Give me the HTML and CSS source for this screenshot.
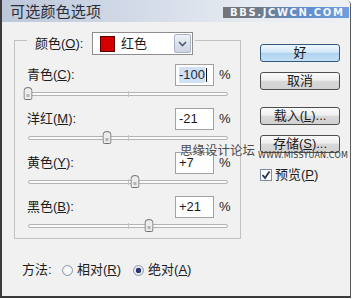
FILE: index.html
```html
<!DOCTYPE html>
<html lang="zh">
<head>
<meta charset="utf-8">
<title>可选颜色选项</title>
<link rel="stylesheet" href="styles.css">
</head>
<body>
<div class="win">
  <div class="titlebar">
    <span class="title">可选颜色选项</span>
    <span class="brand">BBS.JCWCN.COM</span>
  </div>
  <div class="content">
    <div class="left">
      <fieldset class="group">
        <legend class="legend">
          <div class="legend-in">
            <span class="lbl-o">颜色(<u>O</u>):</span>
            <div class="select">
              <span class="swatch"></span>
              <span class="sel-text">红色</span>
              <span class="arrow"><svg width="9" height="6" viewBox="0 0 9 6"><path d="M1 1 L4.5 4.5 L8 1" fill="none" stroke="#4a5a78" stroke-width="1.6"/></svg></span>
            </div>
          </div>
        </legend>

        <div class="row">
          <span class="lbl">青色(<u>C</u>):</span>
          <span class="num focus"><span class="selected">-100</span><span class="caret"></span></span>
          <span class="pct">%</span>
        </div>
        <div class="slider">
          <span class="track"></span><span class="tick"></span>
          <span class="thumb" style="left:0%"><svg width="9" height="13" viewBox="0 0 9 13"><path d="M0.5 3.5 Q0.5 0.5 4.5 0.5 Q8.5 0.5 8.5 3.5 L8.5 11 Q8.5 12.5 7 12.5 L2 12.5 Q0.5 12.5 0.5 11 Z" fill="#ececec" stroke="#6e6e6e"/><rect x="3" y="7" width="3" height="3" fill="#b4b4b4"/></svg></span>
        </div>

        <div class="row">
          <span class="lbl">洋红(<u>M</u>):</span>
          <span class="num">-21</span>
          <span class="pct">%</span>
        </div>
        <div class="slider">
          <span class="track"></span><span class="tick"></span>
          <span class="thumb" style="left:39.5%"><svg width="9" height="13" viewBox="0 0 9 13"><path d="M0.5 3.5 Q0.5 0.5 4.5 0.5 Q8.5 0.5 8.5 3.5 L8.5 11 Q8.5 12.5 7 12.5 L2 12.5 Q0.5 12.5 0.5 11 Z" fill="#ececec" stroke="#6e6e6e"/><rect x="3" y="7" width="3" height="3" fill="#b4b4b4"/></svg></span>
        </div>

        <div class="row">
          <span class="lbl">黄色(<u>Y</u>):</span>
          <span class="num">+7</span>
          <span class="pct">%</span>
        </div>
        <div class="slider">
          <span class="track"></span><span class="tick"></span>
          <span class="thumb" style="left:53.5%"><svg width="9" height="13" viewBox="0 0 9 13"><path d="M0.5 3.5 Q0.5 0.5 4.5 0.5 Q8.5 0.5 8.5 3.5 L8.5 11 Q8.5 12.5 7 12.5 L2 12.5 Q0.5 12.5 0.5 11 Z" fill="#ececec" stroke="#6e6e6e"/><rect x="3" y="7" width="3" height="3" fill="#b4b4b4"/></svg></span>
        </div>

        <div class="row">
          <span class="lbl">黑色(<u>B</u>):</span>
          <span class="num">+21</span>
          <span class="pct">%</span>
        </div>
        <div class="slider last">
          <span class="track"></span><span class="tick"></span>
          <span class="thumb" style="left:60.5%"><svg width="9" height="13" viewBox="0 0 9 13"><path d="M0.5 3.5 Q0.5 0.5 4.5 0.5 Q8.5 0.5 8.5 3.5 L8.5 11 Q8.5 12.5 7 12.5 L2 12.5 Q0.5 12.5 0.5 11 Z" fill="#ececec" stroke="#6e6e6e"/><rect x="3" y="7" width="3" height="3" fill="#b4b4b4"/></svg></span>
        </div>
      </fieldset>

      <div class="method">
        <span class="m-lbl">方法:</span>
        <span class="radio"></span><span class="r-text">相对(<u>R</u>)</span>
        <span class="radio on"></span><span class="r-text">绝对(<u>A</u>)</span>
      </div>
    </div>

    <div class="right">
      <div class="btn default">好</div>
      <div class="btn b2">取消</div>
      <div class="btn b3">载入(<u>L</u>)...</div>
      <div class="btn b4">存储(<u>S</u>)...</div>
      <div class="chk">
        <span class="box"><svg width="10" height="10" viewBox="0 0 10 10"><path d="M1.5 5 L4 8 L8.5 1.5" fill="none" stroke="#2a3550" stroke-width="1.8"/></svg></span>
        <span class="chk-text">预览(<u>P</u>)</span>
      </div>
    </div>
  </div>

  <span class="wm-cn">思缘设计论坛</span>
  <span class="wm-en">WWW.MISSYUAN.COM</span>
</div>
</body>
</html>
```

FILE: styles.css
```css
* { box-sizing: border-box; }
html, body { margin: 0; background: #ffffff; }
body {
  font-family: "Liberation Sans", "Noto Sans CJK SC", sans-serif;
  font-size: 13px;
  line-height: 16px;
  color: #1c1c1c;
}
u { text-decoration: underline; text-underline-offset: 1px; }

.win {
  position: relative;
  width: 351px;
  height: 298px;
  display: flex;
  flex-direction: column;
  background: #f1f1f1;
  border-left: 2px solid #3a3a3a;
  border-right: 1px solid #5a5a5a;
  border-bottom: 2px solid #3a3a3a;
  border-top-right-radius: 5px;
  overflow: hidden;
}

.titlebar {
  height: 22px;
  flex: none;
  display: flex;
  align-items: center;
  padding-left: 8px;
  background: linear-gradient(to right, #bcc7da 0%, #d3dbe8 40%, #e9edf3 75%, #eef0f4 100%);
}
.title {
  font-family: "Noto Sans CJK SC", sans-serif;
  font-size: 15px;
  line-height: 18px;
  color: #2a2e38;
  letter-spacing: 0.2px;
}
.brand {
  margin-left: auto;
  margin-right: 1px;
  width: 126px;
  height: 11px;
  margin-top: 2px;
  padding-left: 7px;
  background: linear-gradient(to right, #747474 0%, #6f7a8c 30%, #5e8cc9 60%, #6d9ee0 100%);
  font-family: "DejaVu Sans", sans-serif;
  font-weight: bold;
  font-size: 10px;
  line-height: 11px;
  letter-spacing: 1.6px;
  color: #f4f6fa;
}

.content { display: flex; flex: 1; }

.left { width: 239px; padding-left: 12px; }

.group {
  width: 227px;
  min-width: 0;
  margin: 4px 0 0 0;
  padding: 9px 11px 0 12px;
  border: 1px solid #c2c2c2;
}
.legend { padding: 6px 2px 0 8px; }
.legend-in { display: flex; align-items: center; }
.lbl-o { width: 57px; }
.select {
  width: 101px;
  height: 23px;
  display: flex;
  align-items: center;
  padding-left: 7px;
  background: #ffffff;
  border: 1px solid #8e8e8e;
}
.swatch {
  width: 15px;
  height: 16px;
  background: #d40000;
  border: 1px solid #5a0000;
}
.sel-text { margin-left: 6px; }
.arrow {
  margin-left: auto;
  margin-right: 1px;
  width: 17px;
  height: 19px;
  display: flex;
  align-items: center;
  justify-content: center;
  background: linear-gradient(#eef1f7, #cdd4e2);
  border: 1px solid #aab4c6;
  border-radius: 2px;
}

.row { display: flex; align-items: center; height: 22px; }
.lbl { flex: 1; }
.num {
  width: 39px;
  height: 22px;
  display: flex;
  align-items: center;
  padding-left: 3px;
  background: #ffffff;
  border: 1px solid #a2a2a2;
}
.selected { background: #cfe1f2; color: #1c2a40; }
.caret { width: 1px; height: 14px; background: #111; margin-left: 1px; }
.pct { margin-left: 5px; width: 10px; }

.slider {
  position: relative;
  width: 200px;
  height: 13px;
  margin: 1px 0 8px 1px;
}
.slider.last { margin-bottom: 6px; }
.track {
  position: absolute;
  left: 0;
  right: 0;
  top: 5px;
  height: 4px;
  border: 1px solid #b3b3b3;
  border-radius: 2px;
  background: #fafafa;
}
.tick {
  position: absolute;
  left: 100px;
  top: 4px;
  width: 1px;
  height: 6px;
  background: #c4c4c4;
}
.thumb {
  position: absolute;
  top: 0;
  width: 9px;
  height: 13px;
  transform: translateX(-50%);
  display: block;
}
.thumb svg { display: block; }

.method {
  display: flex;
  align-items: center;
  height: 18px;
  margin-top: 22px;
  padding-left: 8px;
}
.m-lbl { width: 40px; }
.radio {
  width: 11px;
  height: 11px;
  border-radius: 50%;
  border: 1px solid #8c97aa;
  background: radial-gradient(circle at 50% 40%, #ffffff 0%, #e4e8ee 100%);
}
.radio.on {
  margin-left: 12px;
  background: radial-gradient(circle, #2c3570 0 2.5px, #dfe4ee 3px, #f4f6f9 100%);
}
.r-text { margin-left: 4px; }

.right {
  margin-left: 19px;
  padding-top: 22px;
  display: flex;
  flex-direction: column;
}
.btn {
  width: 80px;
  height: 18px;
  border: 1px solid #4e4e4e;
  border-radius: 3px;
  text-align: center;
  line-height: 16px;
  background: linear-gradient(#fbfbfb 0%, #eeeeee 45%, #d8d8d8 52%, #d2d2d2 100%);
}
.btn.default {
  border-color: #34597e;
  background: linear-gradient(#eef6fd 0%, #d6e9f8 45%, #b0d3f1 52%, #c3e0f6 100%);
}
.b2 { margin-top: 10px; }
.b3 { margin-top: 17px; }
.b4 { margin-top: 10px; }
.chk { display: flex; align-items: center; height: 14px; margin-top: 15px; }
.box {
  width: 12px;
  height: 12px;
  display: flex;
  align-items: center;
  justify-content: center;
  border: 1px solid #7f8ca4;
  background: #f8f9fb;
}
.chk-text { margin-left: 3px; }

.wm-cn {
  position: absolute;
  left: 178px;
  top: 142px;
  font-family: "Noto Sans CJK SC", sans-serif;
  font-size: 12.5px;
  line-height: 15px;
  color: #4c4c4c;
}
.wm-en {
  position: absolute;
  left: 256px;
  top: 151px;
  font-family: "DejaVu Sans", sans-serif;
  font-size: 8px;
  line-height: 9px;
  letter-spacing: 0.1px;
  color: #3c3c3c;
  white-space: nowrap;
}
```
